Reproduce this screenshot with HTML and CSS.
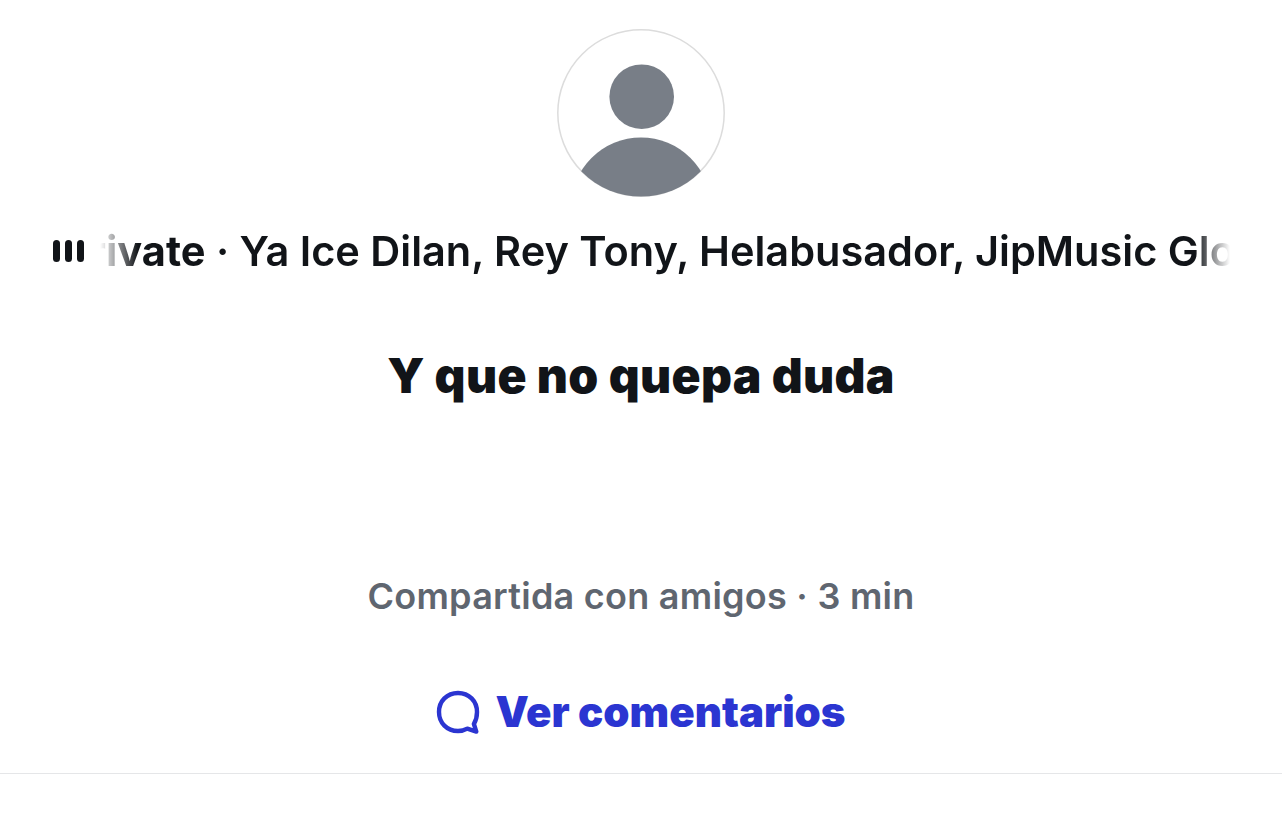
FILE: index.html
```html
<!DOCTYPE html>
<html lang="es">
<head>
<meta charset="UTF-8">
<title>Y que no quepa duda</title>
<link rel="stylesheet" href="styles.css">
</head>
<body>

<div class="post">
    <!-- avatar -->
    <svg class="avatar" viewBox="0 0 168 168" width="168" height="168">
        <defs>
            <clipPath id="avatarClip"><circle cx="84" cy="84" r="83.5"/></clipPath>
        </defs>
        <circle cx="84" cy="84" r="83.2" fill="#fff" stroke="#dcdcdc" stroke-width="1.5"/>
        <g clip-path="url(#avatarClip)" fill="#787e87">
            <circle cx="84.7" cy="67.7" r="32.3"/>
            <circle cx="84" cy="178.500" r="70"/>
        </g>
    </svg>

    <!-- musica -->
    <div class="music">
        <div class="bars"><span></span><span></span><span></span></div>
        <div class="ticker">
            <div class="ticker-text"><b>Private</b> · Ya Ice Dilan, Rey Tony, Helabusador, JipMusic Global</div>
        </div>
    </div>

    <h1 class="title">Y que no quepa duda</h1>

    <p class="meta">Compartida con amigos · 3 min</p>

    <a class="comments" href="#">
        <svg viewBox="0 0 44 44" width="44" height="44" fill="none" stroke="#2b35d1" stroke-width="4.400" stroke-linejoin="round" stroke-linecap="round">
            <path d="M22 3C11 3 3 11 3 22s8 19 19 19c3.500 0 6.500-.8 9.300-2.400l9 3-2.400-7.600C40 30.500 41 26.500 41 22 41 11 33 3 22 3z"/>
        </svg>
        <span>Ver comentarios</span>
    </a>
</div>

</body>
</html>
```

FILE: styles.css
```css
body {
    margin: 0;
    background: #fff;
    font-family: Inter, "Liberation Sans", sans-serif;
    color: #111418;
}

.post {
    display: flex;
    flex-direction: column;
    align-items: center;
    height: 774px;
    padding-top: 29px;
    box-sizing: border-box;
    border-bottom: 1px solid #e5e6e8;
}

.avatar {
    display: block;
    flex: none;
}

/* musica */
.music {
    align-self: stretch;
    display: flex;
    align-items: center;
    height: 51px;
    margin-top: 28px;
    padding-left: 53px;
}

.bars {
    display: flex;
    gap: 5px;
    width: 47px;
    flex: none;
}

.bars span {
    width: 7px;
    height: 22px;
    border-radius: 4px;
    background: #111418;
}

.ticker {
    width: 1130px;
    overflow: hidden;
    white-space: nowrap;
    font-size: 41.5px;
    font-weight: 600;
    -webkit-mask-image: linear-gradient(to right, transparent 0, #000 38px, #000 1095px, transparent 1130px);
    mask-image: linear-gradient(to right, transparent 0, #000 38px, #000 1095px, transparent 1130px);
}

.ticker-text {
    margin-left: -38px;
}

.ticker-text b {
    font-weight: 700;
}

.title {
    margin: 73px 0 0;
    font-size: 48px;
    line-height: 54px;
    font-weight: 900;
    letter-spacing: 0.35px;
}

.meta {
    margin: 171px 0 0;
    font-size: 36px;
    line-height: 44px;
    font-weight: 600;
    letter-spacing: 0.25px;
    color: #5f6670;
}

.comments {
    display: flex;
    align-items: center;
    gap: 15px;
    margin-top: 68px;
    color: #2b35d1;
    text-decoration: none;
    font-size: 42px;
    font-weight: 900;
}
```
